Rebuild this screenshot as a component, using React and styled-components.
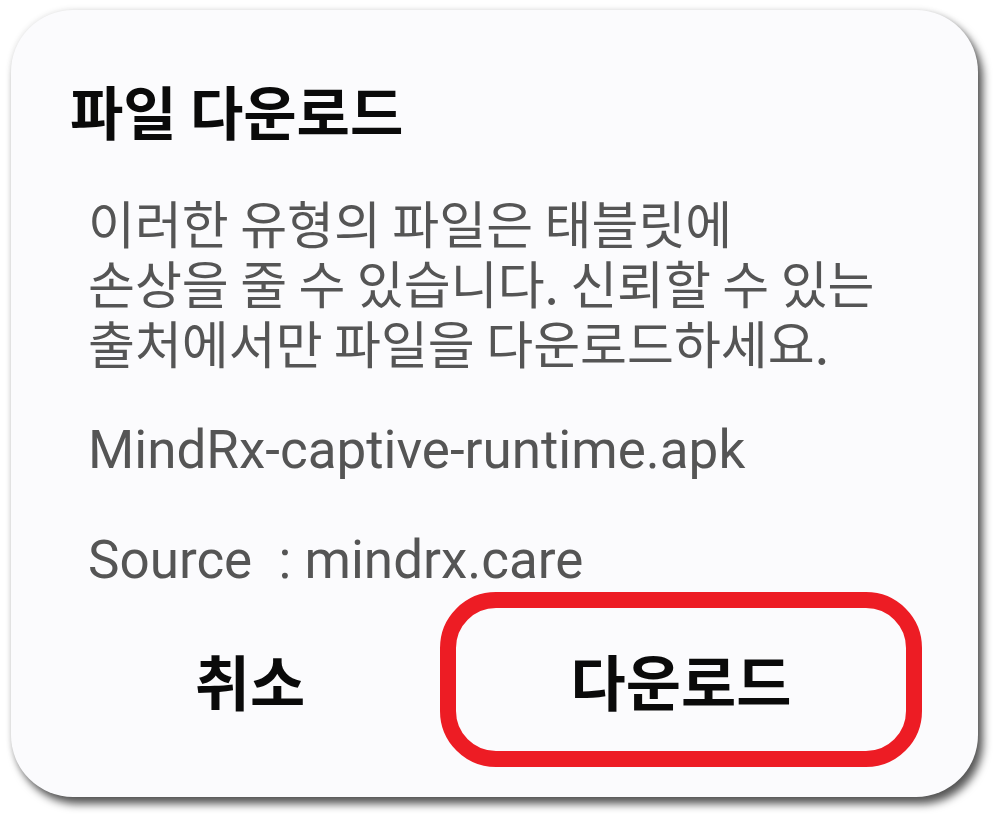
import styled, { createGlobalStyle } from "styled-components"

const GlobalStyle = createGlobalStyle`
  html, body {
    margin: 0;
    padding: 0;
    background: #ffffff;
  }
  body {
    font-family: Roboto, "Noto Sans CJK KR", sans-serif;
  }
`

const Page = styled.div`
  width: 1000px;
  height: 818px;
  padding: 10px 0 0 11px;
  box-sizing: border-box;
`

const Card = styled.div`
  width: 967px;
  height: 787px;
  box-sizing: border-box;
  background: #fbfbfd;
  border-radius: 62px;
  box-shadow: 5px 7px 8px rgba(0, 0, 0, 0.65), 0 0 6px rgba(0, 0, 0, 0.12);
  padding: 65px 0 0 0;
  display: flex;
  flex-direction: column;
`

const Title = styled.h1`
  margin: 0 0 0 59px;
  font-family: "Noto Sans CJK KR", sans-serif;
  font-weight: 700;
  font-size: 58px;
  line-height: 70px;
  color: #0a0a0a;
`

const Body = styled.div`
  margin: 47px 0 0 77px;
  color: #555555;
`

const Message = styled.p`
  margin: 0;
  font-family: "Noto Sans CJK KR", sans-serif;
  font-size: 51px;
  line-height: 60px;
`

const Meta = styled.p`
  margin: ${(props) => props.gap}px 0 0 0;
  font-family: Roboto, sans-serif;
  font-size: 53px;
  line-height: 60px;
`

const Actions = styled.div`
  margin-top: auto;
  margin-bottom: 30px;
  padding: 0 56px 0 49px;
  display: grid;
  grid-template-columns: 1fr 482px;
  align-items: center;
`

const Action = styled.button`
  height: 175px;
  box-sizing: border-box;
  background: transparent;
  border: ${(props) => (props.marked ? "16px solid #ed1c24" : "none")};
  border-radius: 56px;
  font-family: "Noto Sans CJK KR", sans-serif;
  font-weight: 700;
  font-size: 60px;
  color: #0a0a0a;
  padding: 0;
`

const App = () => {
  return (
    <>
      <GlobalStyle />
      <Page>
        <Card>
          <Title>파일 다운로드</Title>
          <Body>
            <Message>
              이러한 유형의 파일은 태블릿에
              <br />
              손상을 줄 수 있습니다. 신뢰할 수 있는
              <br />
              출처에서만 파일을 다운로드하세요.
            </Message>
            <Meta gap={48}>MindRx-captive-runtime.apk</Meta>
            <Meta gap={50}>Source&nbsp; : mindrx.care</Meta>
          </Body>
          <Actions>
            <Action>취소</Action>
            <Action marked>다운로드</Action>
          </Actions>
        </Card>
      </Page>
    </>
  )
}

export default App
